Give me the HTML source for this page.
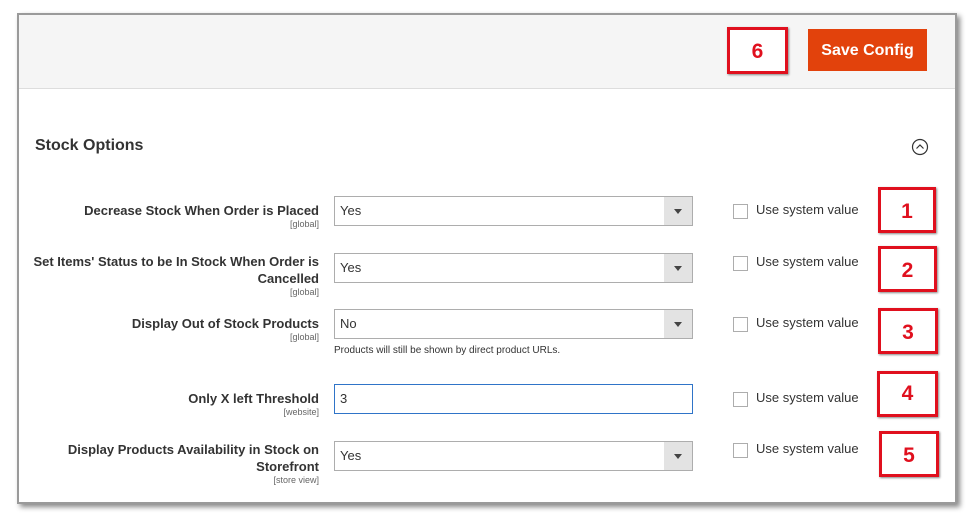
<!DOCTYPE html>
<html><head><style>
body{margin:0;width:974px;height:515px;background:#fff;font-family:"Liberation Sans",sans-serif;position:relative;overflow:hidden}
.frame{position:absolute;left:17px;top:13px;width:936px;height:487px;background:#fff;border:2px solid #9a9a9a;box-shadow:3px 3px 5px #888}
.top{position:absolute;left:0;top:0;width:936px;height:73px;background:#f5f5f5;border-bottom:1px solid #ddd}
.abs{position:absolute}
.num{position:absolute;border:3px solid #e0101e;background:#fff;color:#e0101e;font-weight:bold;font-size:21px;text-align:center;box-sizing:border-box;box-shadow:1px 1px 2px #888}
.btn{position:absolute;left:808px;top:29px;width:119px;height:42px;background:#e2420c;color:#fff;font-weight:bold;font-size:16px;line-height:44px;text-align:center}
.lbl{position:absolute;right:655px;text-align:right;font-size:13px;font-weight:bold;color:#333;line-height:17px}
.sc{display:block;font-size:9px;font-weight:normal;color:#666;line-height:11px}
.sel{position:absolute;left:334px;width:359px;height:30px;border:1px solid #adadad;box-sizing:border-box;font-size:13px;color:#333;line-height:28px;padding-left:5px}
.dd::after{content:"";position:absolute;right:0;top:0;width:28px;height:28px;background:#e3e3e3}
.sel i{position:absolute;right:10px;top:12px;width:0;height:0;border-left:4px solid transparent;border-right:4px solid transparent;border-top:5px solid #444;z-index:1}
.cb{position:absolute;left:733px;width:13px;height:13px;border:1px solid #adadad;background:#fff}
.ct{position:absolute;left:756px;font-size:13px;color:#333}
</style></head><body>
<div class="frame"><div class="top"></div></div>
<div class="num" style="left:727px;top:27px;width:61px;height:47px;line-height:44px">6</div>
<div class="btn">Save Config</div>
<div class="abs" style="left:35px;top:137px;font-size:16px;font-weight:bold;color:#333">Stock Options</div>
<svg class="abs" style="left:911px;top:138px" width="18" height="18"><circle cx="9" cy="9" r="7.5" fill="none" stroke="#333" stroke-width="1.2"/><path d="M5.5 10.5 L9 7 L12.5 10.5" fill="none" stroke="#333" stroke-width="1.2"/></svg>

<div class="lbl" style="top:202px">Decrease Stock When Order is Placed<span class="sc">[global]</span></div>
<div class="sel dd" style="top:196px">Yes<i></i></div>
<div class="cb" style="top:204px"></div><div class="ct" style="top:202px">Use system value</div>
<div class="num" style="left:878px;top:187px;width:58px;height:46px;line-height:44px">1</div>

<div class="lbl" style="top:253px;width:300px">Set Items' Status to be In Stock When Order is Cancelled<span class="sc">[global]</span></div>
<div class="sel dd" style="top:253px">Yes<i></i></div>
<div class="cb" style="top:256px"></div><div class="ct" style="top:254px">Use system value</div>
<div class="num" style="left:878px;top:246px;width:59px;height:46px;line-height:44px">2</div>

<div class="lbl" style="top:315px">Display Out of Stock Products<span class="sc">[global]</span></div>
<div class="sel dd" style="top:309px">No<i></i></div>
<div class="abs" style="left:334px;top:345px;font-size:10px;color:#333">Products will still be shown by direct product URLs.</div>
<div class="cb" style="top:317px"></div><div class="ct" style="top:315px">Use system value</div>
<div class="num" style="left:878px;top:308px;width:60px;height:46px;line-height:44px">3</div>

<div class="lbl" style="top:390px">Only X left Threshold<span class="sc">[website]</span></div>
<div class="sel" style="top:384px;border-color:#2f74c8">3</div>
<div class="cb" style="top:392px"></div><div class="ct" style="top:390px">Use system value</div>
<div class="num" style="left:877px;top:371px;width:61px;height:46px;line-height:40px">4</div>

<div class="lbl" style="top:441px;width:300px">Display Products Availability in Stock on Storefront<span class="sc">[store view]</span></div>
<div class="sel dd" style="top:441px">Yes<i></i></div>
<div class="cb" style="top:443px"></div><div class="ct" style="top:441px">Use system value</div>
<div class="num" style="left:879px;top:431px;width:60px;height:46px;line-height:44px">5</div>
</body></html>
